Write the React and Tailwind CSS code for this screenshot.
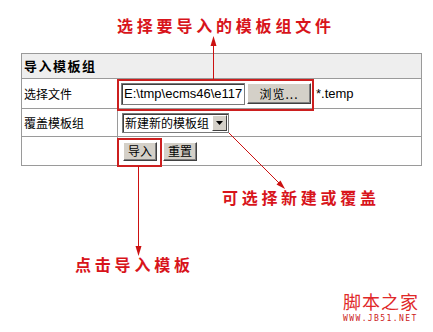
import React from "react";

const cjk = { fontFamily: '"Noto Sans CJK SC", "Noto Sans", sans-serif' };

function Arrows() {
  return (
    <svg
      className="absolute left-0 top-0 pointer-events-none"
      width="433"
      height="332"
      viewBox="0 0 433 332"
    >
      <g stroke="#cc1111" strokeWidth="1" fill="#cc1111">
        <line x1="213.5" y1="79" x2="213.5" y2="44" />
        <polygon points="213.5,36 210.5,46 216.5,46" stroke="none" />
        <line x1="229" y1="133" x2="280" y2="184" />
        <polygon points="285,189 276.5,184.5 280.5,180.5" stroke="none" />
        <line x1="138.5" y1="166" x2="138.5" y2="248" />
        <polygon points="138.5,256 135.5,246 141.5,246" stroke="none" />
      </g>
    </svg>
  );
}

function WinButton({ children, className = "" }) {
  return (
    <div
      className={
        "flex items-center justify-center bg-[#d4d0c8] border border-t-[#ffffff] border-l-[#ffffff] border-r-[#404040] border-b-[#404040] shadow-[inset_-1px_-1px_0_#808080] text-[12px] text-black leading-none " +
        className
      }
      style={cjk}
    >
      {children}
    </div>
  );
}

export default function App() {
  return (
    <div className="relative w-[433px] h-[332px] bg-white overflow-hidden" style={cjk}>
      <div className="pt-[15px] pl-[117px] h-[35px] text-[16px] leading-[20px] font-bold tracking-[3.8px] text-[#d8141b] whitespace-nowrap">
        选择要导入的模板组文件
      </div>

      <div className="mt-[18px] ml-[21px] w-[401px] border border-[#9a9a9a] text-[12px] text-black">
        <div className="h-[25px] bg-[#eeeeee] border-b border-[#9a9a9a] flex items-center pl-[2px] font-bold text-[13px] tracking-[1.5px]">
          导入模板组
        </div>
        <div className="flex h-[30px] border-b border-[#9a9a9a]">
          <div className="w-[96px] border-r border-[#9a9a9a] flex items-center pl-[2px]">选择文件</div>
          <div className="flex-1 flex items-center">
            <div
              className="ml-[3px] w-[124px] h-[22px] border border-[#7a7a7a] shadow-[inset_1px_1px_0_#404040] bg-white overflow-hidden whitespace-nowrap flex items-center pl-[2px] text-[13px]"
              style={{ fontFamily: '"Liberation Sans", sans-serif' }}
            >
              E:\tmp\ecms46\e117
            </div>
            <WinButton className="ml-[2px] w-[64px] h-[21px] text-[#333] tracking-[1px]">浏览...</WinButton>
            <div className="ml-[5px] text-[13px]" style={{ fontFamily: '"Liberation Sans", sans-serif' }}>
              *.temp
            </div>
          </div>
        </div>
        <div className="flex h-[28px] border-b border-[#9a9a9a]">
          <div className="w-[96px] border-r border-[#9a9a9a] flex items-center pl-[2px]">覆盖模板组</div>
          <div className="flex-1 flex items-center">
            <div className="ml-[4px] w-[107px] h-[20px] border border-[#7a7a7a] shadow-[inset_1px_1px_0_#404040] bg-white flex items-center">
              <div className="flex-1 pl-[2px] whitespace-nowrap overflow-hidden">新建新的模板组</div>
              <div className="w-[15px] h-[16px] mr-[1px] bg-[#d4d0c8] border border-t-white border-l-white border-r-[#404040] border-b-[#404040] flex items-center justify-center">
                <svg width="7" height="4" viewBox="0 0 7 4">
                  <polygon points="0,0 7,0 3.5,4" fill="#000" />
                </svg>
              </div>
            </div>
          </div>
        </div>
        <div className="flex h-[28px]">
          <div className="w-[96px] border-r border-[#9a9a9a]"></div>
          <div className="flex-1 flex items-center">
            <WinButton className="ml-[5px] w-[34px] h-[19px]">导入</WinButton>
            <WinButton className="ml-[6px] w-[34px] h-[19px]">重置</WinButton>
          </div>
        </div>
      </div>

      <div className="mt-[21px] pl-[222px] text-[16px] leading-[20px] font-bold tracking-[3.7px] text-[#d8141b] whitespace-nowrap">
        可选择新建或覆盖
      </div>
      <div className="mt-[47px] pl-[75px] text-[16px] leading-[20px] font-bold tracking-[3.8px] text-[#d8141b] whitespace-nowrap">
        点击导入模板
      </div>
      <div className="mt-[17px] pl-[343px] flex flex-col items-start">
        <div className="text-[18px] leading-[20px] tracking-[1px] text-[#e02828]">脚本之家</div>
        <div
          className="mt-[4px] text-[8px] leading-[8px] tracking-[1.4px] text-[#cc2020]"
          style={{ fontFamily: '"DejaVu Sans Mono", monospace' }}
        >
          WWW.JB51.NET
        </div>
      </div>

      <div className="absolute left-[117px] top-[79px] w-[197px] h-[32px] border-2 border-[#cc1f1f]"></div>
      <div className="absolute left-[117px] top-[138px] w-[45px] h-[29px] border-2 border-[#cc1f1f]"></div>
      <Arrows />
    </div>
  );
}
